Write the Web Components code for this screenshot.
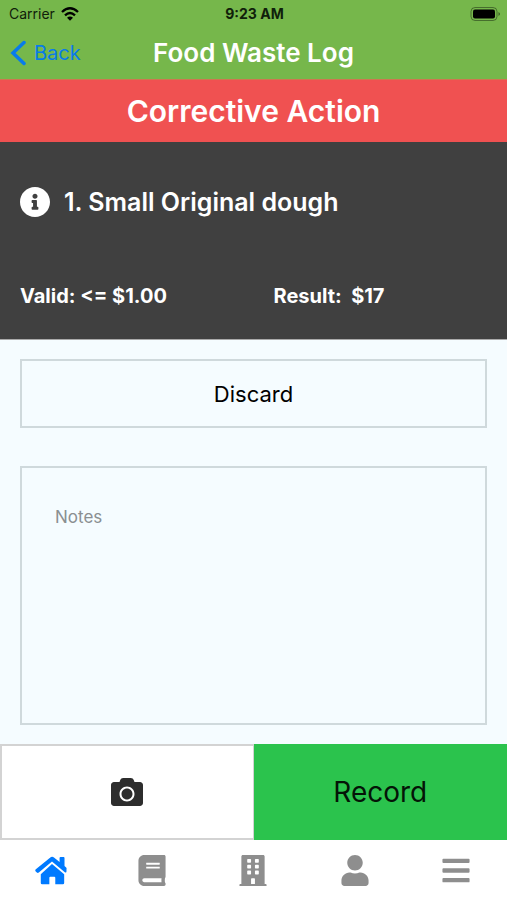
<!DOCTYPE html>
<html lang="en">
<head>
<meta charset="utf-8">
<meta name="viewport" content="width=device-width, initial-scale=1">
<title>Food Waste Log</title>
<style>
  html, body { height: 100%; }
  body { margin: 0; font-family: Inter, "Liberation Sans", sans-serif; background: #fff; }
</style>
</head>
<body>
<waste-log-app></waste-log-app>

<script>
const define = (name, html, setup) => customElements.define(name, class extends HTMLElement {
  constructor() {
    super();
    const root = this.attachShadow({ mode: 'open' });
    root.innerHTML = html;
    if (setup) setup(this, root);
  }
});

const row = (y, h) => `M16 ${y + h}h416a16 16 0 0 0 16-16V${y + 16}a16 16 0 0 0-16-16H16a16 16 0 0 0-16 16v${h - 32}a16 16 0 0 0 16 16z`;
const pane = (x, y) => `M${x} ${y + 12}a12 12 0 0 1 12-12h40a12 12 0 0 1 12 12v40a12 12 0 0 1-12 12h-40a12 12 0 0 1-12-12z`;
const panes = [64, 160, 256].map(y => pane(128, y) + pane(256, y)).join('');

const icons = {
  home: ['107 467 96 88', 'M158 491L195 522V549Q195 553 191 553H168V533Q168 530 165 530H153Q150 530 150 533V553H128Q124 553 124 549V522ZM152 472Q158 467 165 472L181 485V473Q181 470 184 470H193Q196 470 196 473V497L201 502Q203 504 202 507V513Q202 519 197 516L158 484L118 517Q115 520 112 517L108 513Q106 510 109 507Z'],
  book: ['0 0 448 512', 'M448 360V24c0-13.3-10.7-24-24-24H96C43 0 0 43 0 96v320c0 53 43 96 96 96h328c13.3 0 24-10.7 24-24v-16c0-7.5-3.5-14.3-8.9-18.7-4.2-15.4-4.2-59.3 0-74.7 5.4-4.3 8.9-11.1 8.9-18.6zM128 134c0-3.3 2.7-6 6-6h212c3.3 0 6 2.7 6 6v20c0 3.3-2.7 6-6 6H134c-3.3 0-6-2.7-6-6v-20zm0 64c0-3.3 2.7-6 6-6h212c3.3 0 6 2.7 6 6v20c0 3.3-2.7 6-6 6H134c-3.3 0-6-2.7-6-6v-20zm253.4 250H96c-17.7 0-32-14.3-32-32 0-17.6 14.4-32 32-32h285.4c-1.9 17.1-1.9 46.9 0 64z'],
  building: ['0 0 448 512', 'M436 480h-20V24c0-13.3-10.7-24-24-24H56C42.7 0 32 10.7 32 24v456H12c-6.6 0-12 5.4-12 12v20h448v-20c0-6.600-5.400-12-12-12zM192 480v-84a12 12 0 0 1 12-12h40a12 12 0 0 1 12 12v84z' + panes],
  user: ['0 0 448 512', 'M224 256c70.7 0 128-57.3 128-128S294.7 0 224 0 96 57.3 96 128s57.300 128 128 128zm89.600 32h-16.700c-22.200 10.200-46.900 16-72.900 16s-50.600-5.800-72.900-16h-16.700C60.200 288 0 348.200 0 422.400V464c0 26.500 21.500 48 48 48h352c26.500 0 48-21.500 48-48v-41.600c0-74.200-60.200-134.400-134.400-134.400z'],
  menu: ['0 0 448 512', row(60, 72) + row(220, 72) + row(380, 72)],
  info: ['8 8 496 496', 'M256 8C119 8 8 119 8 256s111 248 248 248 248-111 248-248S393 8 256 8zm0 110c23.200 0 42 18.800 42 42s-18.800 42-42 42-42-18.800-42-42 18.800-42 42-42zm56 254a12 12 0 0 1-12 12h-88a12 12 0 0 1-12-12v-24a12 12 0 0 1 12-12h12v-64h-12a12 12 0 0 1-12-12v-24a12 12 0 0 1 12-12h64a12 12 0 0 1 12 12v100h12a12 12 0 0 1 12 12z'],
  camera: ['0 32 512 448', 'M512 144v288c0 26.500-21.500 48-48 48H48c-26.500 0-48-21.500-48-48V144c0-26.500 21.500-48 48-48h88l12.300-32.900c7-18.700 24.900-31.100 44.900-31.100h125.500c20 0 37.900 12.400 44.900 31.100L376 96h88c26.500 0 48 21.500 48 48zM376 288c0-66.200-53.800-120-120-120s-120 53.800-120 120 53.800 120 120 120 120-53.800 120-120zm-32 0c0 48.500-39.500 88-88 88s-88-39.500-88-88 39.500-88 88-88 88 39.500 88 88z'],
};

define('app-icon', `
  <style>
    :host { display: inline-flex; }
    svg { display: block; width: 100%; height: 100%; fill: currentColor; fill-rule: evenodd; }
  </style>
  <svg aria-hidden="true"><path/></svg>`,
  (host, root) => {
    const [box, path] = icons[host.getAttribute('name')];
    root.querySelector('svg').setAttribute('viewBox', box);
    root.querySelector('path').setAttribute('d', path);
  });

define('status-bar', `
  <style>
    :host { display: grid; grid-template-columns: 1fr auto 1fr; align-items: center; height: 27px; padding: 0 7px 0 9px; color: #10200a; font-size: 14px; }
    .left { display: flex; align-items: center; gap: 6px; }
    .time { font-weight: 700; }
    .battery { justify-self: end; }
    svg { display: block; }
  </style>
  <span class="left">Carrier
    <svg width="18" height="14" viewBox="0 0 54 42" fill="none" stroke="#000" stroke-width="7" aria-label="Wi-Fi">
      <path d="M3 15Q27-7 51 15M12 25Q27 11 42 25"/><path d="M27 41L18 32Q27 25 36 32Z" fill="#000" stroke="none"/>
    </svg>
  </span>
  <span class="time">9:23 AM</span>
  <svg class="battery" width="30" height="14" viewBox="0 0 30 14" aria-label="Battery full">
    <rect x="1" y="0.5" width="26" height="13" rx="4" fill="none" stroke="#000" stroke-opacity=".4"/>
    <rect x="3" y="2.500" width="22" height="9" rx="2"/><path d="M28.500 5q3 2 0 4z" opacity=".5"/>
  </svg>`);

define('nav-header', `
  <style>
    :host { display: grid; grid-template-columns: 1fr auto 1fr; align-items: center; height: 52px; padding: 0 10px; box-sizing: border-box; }
    a { display: flex; align-items: center; gap: 8px; color: #087bea; text-decoration: none; font-size: 20px; }
    h1 { margin: 0; color: #fff; font-size: 26px; line-height: 32px; font-weight: 600; }
  </style>
  <a href="#back"><svg width="16" height="26" viewBox="0 0 16 26" fill="none" stroke="currentColor" stroke-width="3.500" stroke-linecap="round" aria-hidden="true"><path d="M14 2.500L3 13L14 23.500"/></svg>Back</a>
  <h1><slot></slot></h1>`);

define('alert-banner', `
  <style>
    :host { display: block; background: #f05151; color: #fff; padding: 12px 0; border-top: 1px solid #cf7650; text-align: center; }
    h2 { margin: 0; font-size: 30px; line-height: 38px; font-weight: 600; }
  </style>
  <h2><slot></slot></h2>`);

define('check-summary', `
  <style>
    :host { display: block; background: #404040; color: #fff; padding: 44px 20px 29px; border-bottom: 1px solid #aaa; }
    .item { display: flex; align-items: center; gap: 14px; }
    app-icon { width: 30px; height: 30px; }
    h3 { margin: 0; font-size: 25px; line-height: 32px; font-weight: 600; }
    .facts { display: grid; grid-template-columns: 1fr 1fr; column-gap: 40px; margin-top: 64px; font-size: 20px; line-height: 28px; font-weight: 700; white-space: pre; }
  </style>
  <div class="item"><app-icon name="info"></app-icon><h3><slot></slot></h3></div>
  <div class="facts"><slot name="valid"></slot><slot name="result"></slot></div>`);

define('action-form', `
  <style>
    :host { display: flex; flex-direction: column; gap: 38px; flex: 1; padding: 19px 20px; background: #f5fcff; }
    button, textarea { box-sizing: border-box; width: 100%; border: 2px solid #cfd9dc; background: transparent; border-radius: 0; font-family: inherit; color: #000; }
    button { height: 69px; font-size: 22px; }
    textarea { flex: 1; display: block; resize: none; padding: 37px 33px; font-size: 17px; line-height: 24px; }
    textarea::placeholder { color: #8a8f91; opacity: 1; }
  </style>
  <button type="button">Discard</button>
  <textarea aria-label="Notes" placeholder="Notes"></textarea>`);

define('action-bar', `
  <style>
    :host { display: grid; grid-template-columns: 1fr 1fr; height: 96px; }
    button { margin: 0; padding: 0; border: 0; border-radius: 0; font-family: inherit; font-size: 28px; color: #041407; background: #2bc34d; }
    .photo { background: #fff; border: 2px solid #d3d3d3; border-right-width: 1px; color: #2d2d2d; display: grid; place-items: center; }
    app-icon { width: 32px; height: 28px; }
  </style>
  <button type="button" class="photo" aria-label="Take photo"><app-icon name="camera"></app-icon></button>
  <button type="button">Record</button>`);

define('tab-bar', `
  <style>
    :host { display: block; background: #fff; }
    nav { display: grid; grid-template-columns: repeat(5, 1fr); height: 60px; }
    a { display: grid; place-items: center; color: #8e8e8e; }
    a[aria-current] { color: #007aff; }
    app-icon { width: 32px; height: 31px; }
    .home { height: 29px; }
  </style>
  <nav aria-label="Main">
    <a href="#home" aria-label="Home" aria-current="page"><app-icon class="home" name="home"></app-icon></a>
    <a href="#logs" aria-label="Logs"><app-icon name="book"></app-icon></a>
    <a href="#site" aria-label="Site"><app-icon name="building"></app-icon></a>
    <a href="#profile" aria-label="Profile"><app-icon name="user"></app-icon></a>
    <a href="#menu" aria-label="Menu"><app-icon name="menu"></app-icon></a>
  </nav>`);

define('waste-log-app', `
  <style>
    :host { display: flex; flex-direction: column; min-height: 100vh; }
    header { background: #76b74b; }
    main { display: flex; flex-direction: column; flex: 1; }
  </style>
  <header><status-bar></status-bar><nav-header>Food Waste Log</nav-header></header>
  <main>
    <alert-banner>Corrective Action</alert-banner>
    <check-summary>1. Small Original dough<span slot="valid">Valid: &lt;= $1.00</span><span slot="result">Result:  $17</span></check-summary>
    <action-form></action-form>
    <action-bar></action-bar>
  </main>
  <tab-bar></tab-bar>`);
</script>
</body>
</html>
